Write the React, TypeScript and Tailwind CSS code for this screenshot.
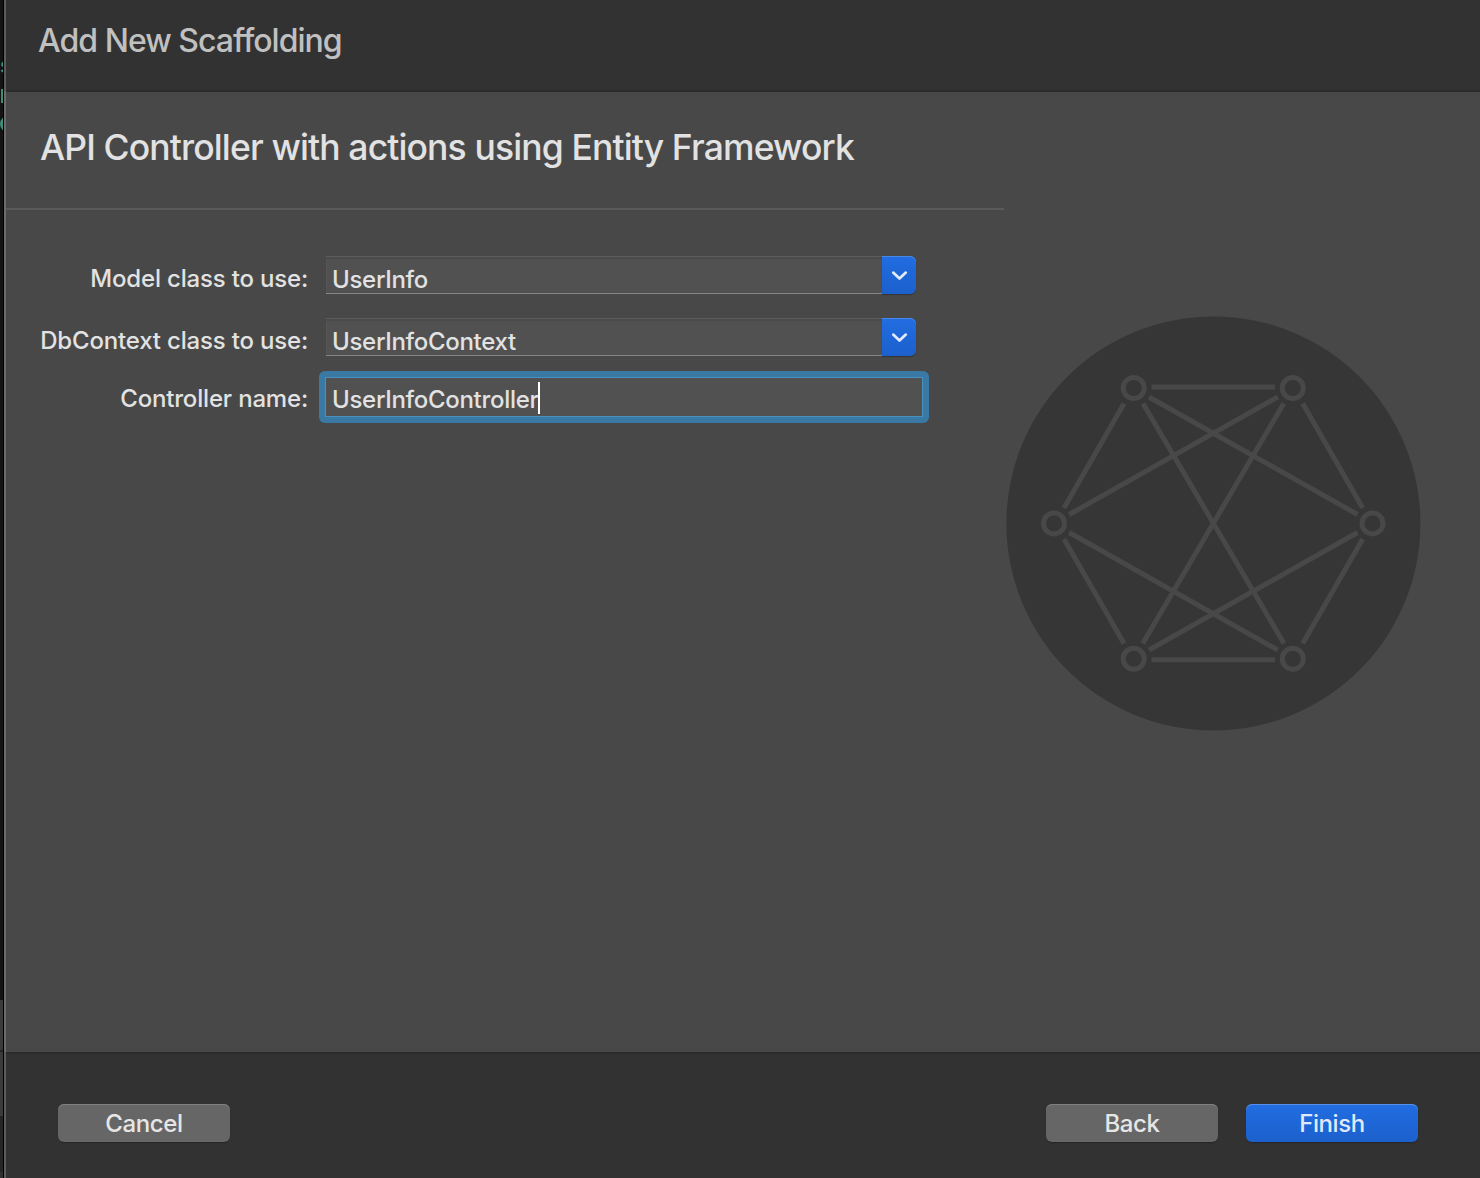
import React from "react";

const NODES = [
  [1133.7, 388],
  [1292.8, 388],
  [1054, 523.4],
  [1372.5, 523.4],
  [1133.7, 658.8],
  [1292.8, 658.8],
];

const EDGES = [
  [1151.5, 387, 1275, 387],
  [1151.5, 659.7, 1275, 659.7],
  [1124, 403.5, 1064, 508],
  [1302.7, 403.5, 1362.7, 508],
  [1124, 643.5, 1064, 539],
  [1302.7, 643.5, 1362.7, 539],
  [1149, 397, 1357.5, 514.5],
  [1277.7, 397, 1069.2, 514.5],
  [1149, 650, 1357.5, 532.5],
  [1277.7, 650, 1069.2, 532.5],
  [1143, 403.5, 1284, 643.5],
  [1283.7, 403.5, 1142.7, 643.5],
];

function NetworkEmblem() {
  return (
    <svg className="block h-[416px] w-[416px]" viewBox="1005 315 416 416" fill="none" stroke="#484848" strokeWidth="5">
      <circle cx="1213.4" cy="523.4" r="207" fill="#363636" stroke="none" />
      {EDGES.map(([x1, y1, x2, y2], i) => (
        <line key={i} x1={x1} y1={y1} x2={x2} y2={y2} />
      ))}
      {NODES.map(([cx, cy], i) => (
        <circle key={i} cx={cx} cy={cy} r="10.5" />
      ))}
    </svg>
  );
}

function Label({ children }: { children: string }) {
  return (
    <div className="flex h-[38px] w-[302px] shrink-0 justify-end">
      <span className="pt-[3px] text-[24px] leading-[40px] tracking-[-0.18px] whitespace-nowrap">{children}</span>
    </div>
  );
}

function Combo({ value }: { value: string }) {
  return (
    <div className="ml-[18px] flex h-[38px] w-[590px]">
      <div className="flex h-[38px] w-[556px] items-center border-t border-b border-t-[#5c5c5c] border-b-[#858585] bg-[#515151] pt-2.5 pl-1.5 shadow-[inset_0_2px_1px_#4b4b4b,inset_1px_0_0_#575757]">
        <span className="text-[24px] leading-[36px] tracking-[-0.3px]">{value}</span>
      </div>
      <div className="flex h-[38px] w-[34px] items-center justify-center rounded-r-[6px] bg-linear-to-b from-[#216de2] to-[#1c60cc] shadow-[inset_0_1px_0_#4a88e8,0_1px_1px_#353535]">
        <svg className="h-5 w-5" viewBox="0 0 20 20" fill="none" stroke="#e1ebfb" strokeWidth="2.7" strokeLinecap="round" strokeLinejoin="round">
          <path d="M4.2 7.6L10.5 13.6L16.8 7.6" />
        </svg>
      </div>
    </div>
  );
}

function Button({ children, primary }: { children: string; primary?: boolean }) {
  return (
    <button
      className={`h-[38px] w-[172px] rounded-[6px] pt-px text-center text-[24px] leading-[38px] tracking-[-0.4px] ${
        primary
          ? "bg-linear-to-b from-[#216de2] to-[#1c60cc] text-[#dfe9fa] shadow-[inset_0_1px_0_#5590e9,0_1px_1px_#262626]"
          : "bg-[#666666] text-[#e6e6e6] shadow-[inset_0_1px_0_#808080,0_1px_1px_#262626]"
      }`}
    >
      {children}
    </button>
  );
}

export default function App() {
  return (
    <div className="flex h-[1178px] w-[1480px] overflow-hidden bg-[#323232] font-['Inter',sans-serif] font-[450] text-[#e2e2e2]">
      <div className="flex w-[3px] shrink-0 flex-col overflow-hidden bg-[#141414]">
        <div className="relative h-[1000px] shrink-0 overflow-hidden text-[#3a8f78]">
          <span className="absolute top-[56px] left-[-0.5px] font-['Liberation_Mono',monospace] text-[22px] leading-6 font-bold">s</span>
          <div className="absolute top-[89px] left-px h-3.5 w-0.5 bg-[#3a8f78]" />
          <div className="absolute top-[116px] left-0 h-4 w-4 rounded-full border-3 border-[#3a8f78]" />
        </div>
        <div className="h-[50px] shrink-0 bg-[#3b3b3b]" />
        <div className="h-0.5 shrink-0 bg-[#252525]" />
        <div className="h-16 shrink-0 bg-[#3b3b3b]" />
        <div className="h-14 shrink-0 bg-[#252525]" />
        <div className="flex-1 bg-[#303030]" />
      </div>
      <div className="w-px shrink-0 bg-black" />
      <div className="flex w-0.5 shrink-0 flex-col">
        <div className="h-[91px] bg-[#5c5c5c]" />
        <div className="h-[961px] bg-[#6b6b6b]" />
        <div className="flex-1 bg-[#5c5c5c]" />
      </div>
      <div className="flex flex-1 flex-col">
        <header className="h-[92px] shrink-0 border-b-2 border-[#2b2b2b] pt-[21px] pl-8">
          <h1 className="text-[32px] leading-10 tracking-[-0.97px] whitespace-nowrap text-[#c0c0c0]">Add New Scaffolding</h1>
        </header>
        <main className="flex h-[960px] shrink-0 bg-[#484848]">
          <section className="w-[998px] shrink-0">
            <div className="h-[118px] border-b-2 border-[#5a5a5a] pt-[34px] pl-[34px]">
              <h2 className="text-[35.5px] leading-[44px] tracking-[-0.87px] whitespace-nowrap">API Controller with actions using Entity Framework</h2>
            </div>
            <div className="mt-[46px] flex">
              <Label>Model class to use:</Label>
              <Combo value="UserInfo" />
            </div>
            <div className="mt-6 flex">
              <Label>DbContext class to use:</Label>
              <Combo value="UserInfoContext" />
            </div>
            <div className="mt-[15px] flex h-[52px]">
              <div className="pt-[5px]">
                <Label>Controller name:</Label>
              </div>
              <div className="ml-[11px] h-[52px] w-[610px] rounded-[6px] bg-[#3a79a4] p-1.5">
                <div className="flex h-10 items-center border border-[#4790c0] bg-[#515151] pt-1.5 pl-1.5">
                  <span className="text-[24px] leading-[36px] tracking-[-0.3px]">UserInfoController</span>
                  <span className="mb-1 h-8 w-0.5 bg-white" />
                </div>
              </div>
            </div>
          </section>
          <aside className="pt-[223px] pl-px">
            <NetworkEmblem />
          </aside>
        </main>
        <footer className="flex flex-1 items-start border-t-2 border-[#2b2b2b] pt-[50px] pr-[62px] pl-[52px]">
          <Button>Cancel</Button>
          <div className="ml-auto flex gap-7">
            <Button>Back</Button>
            <Button primary>Finish</Button>
          </div>
        </footer>
      </div>
    </div>
  );
}
